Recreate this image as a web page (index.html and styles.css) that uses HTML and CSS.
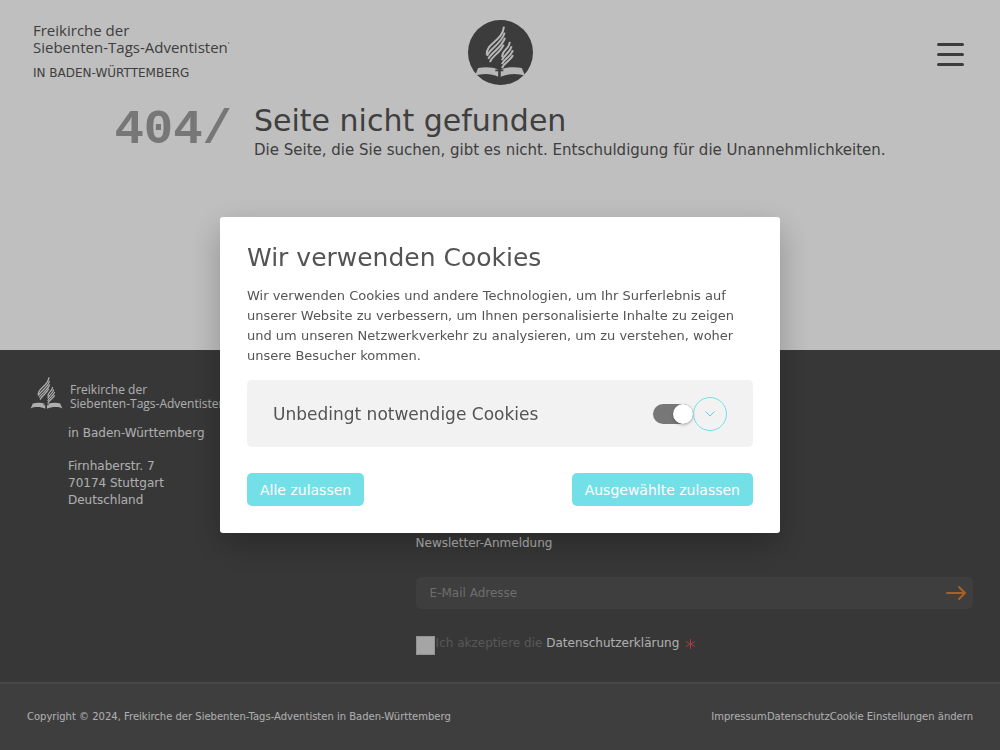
FILE: index.html
```html
<!DOCTYPE html>
<html lang="de">
<head>
    <meta charset="utf-8">
    <meta name="viewport" content="width=device-width, initial-scale=1">
    <title>Seite nicht gefunden</title>
    <link rel="stylesheet" href="styles.css">
</head>
<body>
    <svg width="0" height="0" class="sprite" aria-hidden="true">
        <symbol id="flame" viewBox="57 46 156 154">
            <g fill="none" stroke="currentColor" stroke-width="6">
                <path d="M95 133C92 98 143 92 147 48"/>
                <path d="M96 136C104 114 141 99 149 66"/>
                <path d="M100 145C108 126 140 113 150 82"/>
                <path d="M105 155C108 139 137 126 146 102"/>
                <path d="M142 140C138 119 166 115 164 94"/>
                <path d="M141 149C148 132 166 126 170 107"/>
                <path d="M141 161C148 145 168 138 174 119"/>
                <path d="M141 173C148 156 168 150 174 134"/>
            </g>
            <path fill="currentColor" d="M57 198C62 191 66 181 69 173C92 168 112 170 130 177V199C108 190 82 187 57 198ZM213 198C208 191 204 181 201 173C178 168 158 170 137 177V199C160 190 188 187 213 198Z"/>
            <path fill="none" stroke="var(--cross)" stroke-width="5" d="M133 164V200M121 180H145"/>
        </symbol>
    </svg>

    <header class="header">
        <a href="#" class="brand">
            <span class="brand-name">Freikirche der<br>Siebenten-Tags-Adventisten<sup>'</sup></span>
            <span class="brand-region">IN BADEN-WÜRTTEMBERG</span>
        </a>
        <a href="#" class="emblem" aria-label="Startseite">
            <svg><use href="#flame"/></svg>
        </a>
        <button type="button" class="menu-button" aria-label="Menü">
            <span></span><span></span><span></span>
        </button>
    </header>

    <main class="main">
        <div class="error-code">404/</div>
        <div>
            <h1>Seite nicht gefunden</h1>
            <p>Die Seite, die Sie suchen, gibt es nicht. Entschuldigung für die Unannehmlichkeiten.</p>
        </div>
    </main>

    <footer>
        <div class="footer-main">
            <div class="contact">
                <svg class="footer-logo"><use href="#flame"/></svg>
                <div class="footer-brand">Freikirche der<br>Siebenten-Tags-Adventisten</div>
                <address>
                    <p>in Baden-Württemberg</p>
                    <p>Firnhaberstr. 7<br>70174 Stuttgart<br>Deutschland</p>
                </address>
            </div>
            <form class="newsletter">
                <label for="email">Newsletter-Anmeldung</label>
                <div class="email-row">
                    <input type="email" id="email" placeholder="E-Mail Adresse">
                    <button type="submit" aria-label="Absenden">
                        <svg width="22" height="16" viewBox="0 0 22 16" fill="none" stroke="currentColor" stroke-width="2" stroke-linecap="round"><path d="M2 8H20M14 2L20 8L14 14"/></svg>
                    </button>
                </div>
                <div class="consent">
                    <input type="checkbox" id="consent">
                    <label for="consent">Ich akzeptiere die <a href="#">Datenschutzerklärung</a></label>
                    <svg class="required" width="9" height="10" viewBox="0 0 9 10" stroke="currentColor"><path d="M4.500 0V10M0 2.500L9 7.500M9 2.500L0 7.500"/></svg>
                </div>
            </form>
        </div>
        <div class="footer-bottom">
            <span>Copyright © 2024, Freikirche der Siebenten-Tags-Adventisten in Baden-Württemberg</span>
            <nav><a href="#">Impressum</a><a href="#">Datenschutz</a><a href="#">Cookie Einstellungen ändern</a></nav>
        </div>
    </footer>

    <div class="overlay">
        <div class="cookie-modal" role="dialog" aria-labelledby="cookie-title">
            <h2 id="cookie-title">Wir verwenden Cookies</h2>
            <p>Wir verwenden Cookies und andere Technologien, um Ihr Surferlebnis auf unserer Website zu verbessern, um Ihnen personalisierte Inhalte zu zeigen und um unseren Netzwerkverkehr zu analysieren, um zu verstehen, woher unsere Besucher kommen.</p>
            <div class="cookie-category">
                <label for="essential">Unbedingt notwendige Cookies</label>
                <input type="checkbox" id="essential" class="switch" checked>
                <button type="button" class="expand" aria-label="Details">
                    <svg width="10" height="6" viewBox="0 0 10 6" fill="none" stroke="currentColor"><path d="M0.500 0.500L5 5L9.500 0.500"/></svg>
                </button>
            </div>
            <div class="cookie-actions">
                <button type="button">Alle zulassen</button>
                <button type="button">Ausgewählte zulassen</button>
            </div>
        </div>
    </div>
</body>
</html>
```

FILE: styles.css
```css
* {
    box-sizing: border-box;
}
body {
    display: flex;
    flex-direction: column;
    min-height: 100vh;
    margin: 0;
    font-family: "DejaVu Sans", sans-serif;
    color: #545454;
    background: #fff;
}
h1, h2, p {
    margin: 0;
    font-weight: normal;
}
a {
    color: inherit;
    text-decoration: none;
}
button {
    padding: 0;
    border: 0;
    background: none;
    font: inherit;
    cursor: pointer;
}
.sprite {
    position: absolute;
}

/* header */
.header {
    display: grid;
    grid-template-columns: 1fr auto 1fr;
    align-items: start;
    padding: 20px 33px 0;
}
.brand-name {
    display: block;
    padding-top: 2px;
    font-family: "Open Sans", sans-serif;
    font-size: 15px;
    line-height: 17px;
}
.brand-name sup {
    font-size: 8px;
    line-height: 0;
}
.brand-region {
    display: block;
    margin-top: 8px;
    font-size: 12px;
    line-height: 18px;
}
.emblem {
    --cross: #505050;
    display: flex;
    justify-content: center;
    width: 65px;
    height: 65px;
    padding-top: 6px;
    border-radius: 50%;
    background: #505050;
    color: #f4f4f4;
}
.emblem svg {
    width: 52px;
    height: 51px;
}
.menu-button {
    display: grid;
    gap: 7px;
    justify-self: end;
    width: 27px;
    margin: 23px 3px 0 0;
}
.menu-button span {
    height: 3px;
    border-radius: 2px;
    background: #505050;
}

/* 404 */
.main {
    display: flex;
    flex: 1;
    justify-content: center;
    gap: 22px;
    padding-top: 16px;
}
.error-code {
    font: bold 49px/58px "Liberation Mono", monospace;
    color: #9f9f9f;
}
.main h1 {
    font-size: 30px;
    line-height: 40px;
}
.main p {
    font-size: 15px;
    line-height: 18px;
}

/* footer */
footer {
    color: #e8e8e8;
    background: #4a4a4a;
    font-size: 12px;
}
.footer-main {
    display: grid;
    grid-template-columns: 2fr 3fr;
    gap: 14px;
    min-height: 332px;
    padding: 27px 27px 0 30px;
}
.contact {
    --cross: #4a4a4a;
    display: grid;
    grid-template-columns: 33px 1fr;
    align-content: start;
    column-gap: 5px;
}
.footer-logo {
    width: 33px;
    height: 32px;
}
.footer-brand {
    padding: 6px 0 0 2px;
    font-family: "Open Sans", sans-serif;
    line-height: 14px;
}
address {
    grid-column: 2;
    margin-top: 8px;
    font-style: normal;
    line-height: 17px;
}
address p {
    margin: 6px 0 16px;
}
.newsletter {
    padding-top: 157px;
}
.newsletter > label {
    display: block;
    line-height: 18px;
}
.email-row {
    display: flex;
    align-items: center;
    height: 32px;
    margin-top: 25px;
    padding: 0 6px 0 14px;
    border-radius: 5px;
    background: #535353;
}
.email-row input {
    flex: 1;
    min-width: 0;
    padding: 0;
    border: 0;
    outline: 0;
    background: none;
    color: #fff;
    font: inherit;
}
.email-row input::placeholder {
    color: #929292;
}
.email-row button {
    display: flex;
    color: #e08030;
}
.consent {
    display: flex;
    align-items: start;
    margin-top: 25px;
    color: #767676;
    line-height: 18px;
}
.consent input {
    appearance: none;
    width: 19px;
    height: 19px;
    margin: 2px 1px 0 0;
    border: 1px solid #c4c4c4;
    background: #dcdcdc;
}
.consent a {
    color: #e8e8e8;
}
.required {
    margin: 5px 0 0 7px;
    color: #e05050;
}
.footer-bottom {
    display: flex;
    justify-content: space-between;
    align-items: center;
    height: 68px;
    padding: 0 27px 2px;
    border-top: 2px solid #606060;
    background: #535353;
    font-size: 10px;
}

/* cookie dialog */
.overlay {
    position: fixed;
    inset: 0;
    display: flex;
    align-items: center;
    justify-content: center;
    background: rgba(0, 0, 0, 0.25);
}
.cookie-modal {
    width: 560px;
    max-width: 100%;
    padding: 27px;
    border-radius: 3px;
    background: #fff;
    box-shadow: 0 12px 32px rgba(0, 0, 0, 0.25);
}
.cookie-modal h2 {
    font-size: 25px;
    line-height: 28px;
}
.cookie-modal p {
    margin: 14px 0;
    font-size: 13px;
    line-height: 20px;
}
.cookie-category {
    display: flex;
    align-items: center;
    height: 67px;
    padding: 0 26px;
    border-radius: 5px;
    background: #f2f2f2;
    font-size: 17px;
}
.cookie-category label {
    flex: 1;
}
.switch {
    appearance: none;
    display: flex;
    justify-content: flex-end;
    width: 40px;
    height: 20px;
    margin: 0;
    border-radius: 10px;
    background: #777;
}
.switch::before {
    content: "";
    width: 20px;
    height: 20px;
    border-radius: 50%;
    background: #fff;
    box-shadow: 0 1px 3px rgba(0, 0, 0, 0.3);
}
.switch:not(:checked) {
    justify-content: flex-start;
}
.expand {
    display: flex;
    align-items: center;
    justify-content: center;
    width: 34px;
    height: 34px;
    border: 1px solid #73dfe7;
    border-radius: 50%;
    color: #5fd0da;
}
.cookie-actions {
    display: flex;
    justify-content: space-between;
    margin-top: 26px;
}
.cookie-actions button {
    height: 33px;
    padding: 0 13px;
    border-radius: 5px;
    background: #73dfe7;
    color: #fff;
    font-size: 14px;
}
```
